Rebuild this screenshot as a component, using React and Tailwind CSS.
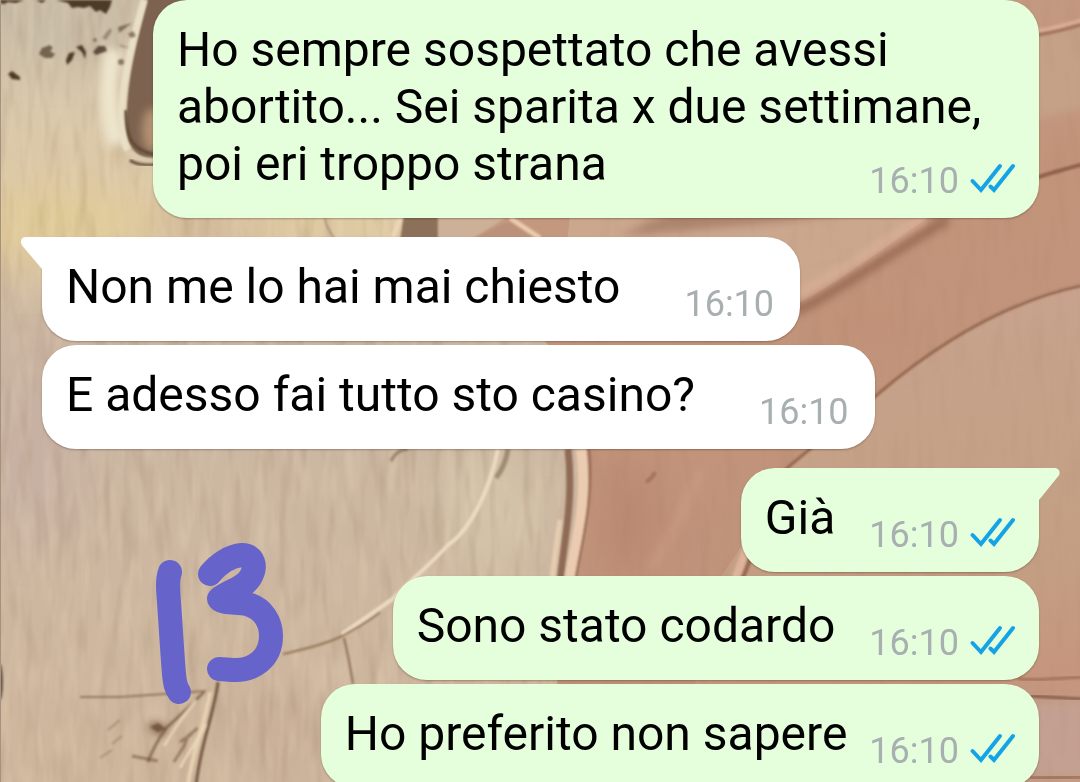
const messages = [
  {
    id: 1,
    mine: true,
    text: "Ho sempre sospettato che avessi abortito... Sei sparita x due settimane, poi eri troppo strana",
    time: "16:10",
  },
  { id: 2, mine: false, first: true, text: "Non me lo hai mai chiesto", time: "16:10" },
  { id: 3, mine: false, text: "E adesso fai tutto sto casino?", time: "16:10" },
  { id: 4, mine: true, first: true, text: "Già", time: "16:10" },
  { id: 5, mine: true, text: "Sono stato codardo", time: "16:10" },
  { id: 6, mine: true, tight: true, text: "Ho preferito non sapere", time: "16:10" },
];

function ReadTicks() {
  return (
    <svg
      viewBox="0 0 46 32"
      className="mb-1 h-8 w-[46px]"
      fill="none"
      stroke="#14a4e6"
      strokeWidth="4"
      strokeLinecap="round"
      role="img"
      aria-label="Letto"
    >
      <path d="M3.500 18 L12 27 L31 3" />
      <path d="M21.500 23.500 L25 27 L44 3" />
    </svg>
  );
}

function Tail({ mine }) {
  return mine ? (
    <svg viewBox="0 0 22 34" className="absolute top-0 -right-[21px] h-[34px] w-[22px]" aria-hidden="true">
      <path d="M0 0H16C21 0 23.500 4.500 20 8.500L1 32H0Z" fill="#e5ffdc" />
    </svg>
  ) : (
    <svg viewBox="0 0 22 34" className="absolute top-0 -left-[21px] h-[34px] w-[22px]" aria-hidden="true">
      <path d="M22 0H5C0 0 -1.500 4.500 1.500 9L21 32H22Z" fill="#ffffff" />
    </svg>
  );
}

function Bubble({ message }) {
  const { mine, first, tight, text, time } = message;
  const side = mine ? "self-end bg-[#e5ffdc]" : "self-start bg-white";
  const corner = first ? (mine ? "rounded-tr-none" : "rounded-tl-none") : "";
  const space = first ? "mt-[19px]" : "mt-1 first:mt-0";
  const timeGap = mine ? (tight ? "ml-[22px]" : "ml-[34px]") : "mr-0.5 ml-16";

  return (
    <li
      className={`relative max-w-[886px] rounded-[34px] px-6 pt-[21px] pb-4 shadow-[0_1px_2px_rgba(60,35,20,0.35)] ${side} ${corner} ${space}`}
    >
      {first && <Tail mine={mine} />}
      <p className="text-[48px] leading-[57px] text-black">
        {text}
        <span
          className={`float-right mt-[25px] flex items-center gap-2.5 text-4xl leading-[42px] text-[#a7afb1] ${timeGap}`}
        >
          <time>{time}</time>
          {mine && <ReadTicks />}
        </span>
      </p>
    </li>
  );
}

// painted plaster wallpaper
function Wallpaper() {
  return (
    <svg
      viewBox="0 0 1080 782"
      preserveAspectRatio="xMidYMid slice"
      className="absolute inset-0 h-full w-full"
      aria-hidden="true"
    >
      <defs>
        <linearGradient id="cream" x1="0" y1="0" x2="0" y2="1">
          <stop offset="0" stopColor="#cbbea7" />
          <stop offset="0.16" stopColor="#dac8aa" />
          <stop offset="0.29" stopColor="#decaa2" />
          <stop offset="0.42" stopColor="#cbb6a2" />
          <stop offset="0.65" stopColor="#ccb7a1" />
          <stop offset="1" stopColor="#ceb69c" />
        </linearGradient>
        <linearGradient id="clay" x1="0" y1="0" x2="0.3" y2="1">
          <stop offset="0" stopColor="#c79f89" />
          <stop offset="0.45" stopColor="#c2957b" />
          <stop offset="1" stopColor="#be917a" />
        </linearGradient>
        <linearGradient id="sand" gradientUnits="userSpaceOnUse" x1="900" y1="300" x2="960" y2="782">
          <stop offset="0" stopColor="#c8a28d" />
          <stop offset="0.35" stopColor="#c4a187" />
          <stop offset="0.6" stopColor="#c49e82" />
          <stop offset="0.8" stopColor="#c5967d" />
          <stop offset="1" stopColor="#c39a85" />
        </linearGradient>
        <filter id="soft1" x="-20%" y="-20%" width="140%" height="140%">
          <feGaussianBlur stdDeviation="1" />
        </filter>
        <filter id="soft4" filterUnits="userSpaceOnUse" x="-40" y="-40" width="1160" height="862">
          <feGaussianBlur stdDeviation="4" />
        </filter>
        <filter id="soft20" filterUnits="userSpaceOnUse" x="-80" y="-80" width="1240" height="942">
          <feGaussianBlur stdDeviation="20" />
        </filter>
        <filter id="grain" x="0" y="0" width="100%" height="100%" colorInterpolationFilters="sRGB">
          <feTurbulence type="fractalNoise" baseFrequency="0.09 0.016" numOctaves="2" seed="7" />
          <feColorMatrix values="0 0 0 0 0.45  0 0 0 0 0.32  0 0 0 0 0.22  2.5 0 0 0 -1.2" />
        </filter>
        <filter id="grainLight" x="0" y="0" width="100%" height="100%" colorInterpolationFilters="sRGB">
          <feTurbulence type="fractalNoise" baseFrequency="0.09 0.02" numOctaves="2" seed="19" />
          <feColorMatrix values="0 0 0 0 0.93  0 0 0 0 0.85  0 0 0 0 0.74  2.5 0 0 0 -1.1" />
        </filter>
      </defs>

      <rect width="1080" height="782" fill="url(#cream)" />
      <g filter="url(#soft20)">
        <ellipse cx="60" cy="225" rx="80" ry="30" fill="#e0cb96" />
        <ellipse cx="60" cy="30" rx="70" ry="30" fill="#c8bba6" />
        <ellipse cx="30" cy="450" rx="60" ry="90" fill="#c7b1a2" />
        <ellipse cx="490" cy="510" rx="50" ry="60" fill="#d3c3a9" />
        <ellipse cx="270" cy="740" rx="60" ry="50" fill="#cab09a" />
        <ellipse cx="210" cy="225" rx="60" ry="12" fill="#c5a991" />
      </g>
      <rect width="566" height="782" filter="url(#grainLight)" opacity="0.25" />
      <rect width="566" height="782" filter="url(#grain)" opacity="0.14" />

      {/* clay field on the right */}
      <path d="M405 216H1000V0H1080V782H560C560 680 548 620 570 572C584 530 590 500 586 449C575 380 560 330 440 250Z" fill="url(#clay)" />
      <path d="M570 216H930C880 250 850 275 798 304L560 300Z" fill="#cba78e" />
      <path d="M1020 40L1084 24V108L1020 122Z" fill="#c4a187" filter="url(#soft4)" />
      <path d="M1080 284C1000 300 930 350 876 395C840 425 810 450 780 475C760 510 740 560 700 600L690 782H1080Z" fill="url(#sand)" />
      <path d="M1020 702L1084 700V776H1020Z" fill="#c3a091" filter="url(#soft4)" />
      <g filter="url(#soft20)">
        <ellipse cx="630" cy="520" rx="22" ry="56" fill="#b9866e" />
        <ellipse cx="860" cy="325" rx="50" ry="20" fill="#c19177" />
      </g>

      {/* ridges and creases */}
      <g fill="none">
        <path d="M796 311C840 290 880 258 948 219" stroke="#8f6249" strokeWidth="10" opacity="0.8" filter="url(#soft4)" />
        <path d="M798 296C840 273 880 246 925 217" stroke="#dcb199" strokeWidth="9" opacity="0.8" filter="url(#soft4)" />
        <path d="M1036 178C1050 173 1065 169 1084 164" stroke="#91614a" strokeWidth="4" filter="url(#soft1)" />
        <path d="M785 470C810 448 850 418 878 394C930 350 1000 302 1084 285" stroke="#95684f" strokeWidth="3" filter="url(#soft1)" />
        <path d="M1030 32C1055 30 1068 24 1084 20" stroke="#d9ac95" strokeWidth="5" filter="url(#soft1)" />
        <path d="M1030 36C1055 33 1068 28 1084 24" stroke="#a3735c" strokeWidth="3" filter="url(#soft1)" />
        <path d="M1018 679C1040 681 1060 678 1084 677" stroke="#a3735a" strokeWidth="3" filter="url(#soft1)" />
        <path d="M1030 696L1084 699" stroke="#87604f" strokeWidth="3" filter="url(#soft1)" />
        <path d="M1030 778L1084 777" stroke="#a3785f" strokeWidth="5" filter="url(#soft1)" />
        <path d="M735 580C742 562 746 550 750 535" stroke="#dfb49c" strokeWidth="8" filter="url(#soft1)" />
        <path d="M742 580C750 562 754 548 757 535" stroke="#976850" strokeWidth="4" filter="url(#soft1)" />
        <path d="M646 482C650 480 653 477 655 472" stroke="#a5745c" strokeWidth="4" filter="url(#soft1)" />
        <path d="M700 470C690 500 670 535 652 570" stroke="#cb9d85" strokeWidth="10" opacity="0.6" filter="url(#soft4)" />
      </g>
      <rect x="566" width="514" height="782" filter="url(#grain)" opacity="0.05" />

      {/* dark hollow at the top left */}
      <path d="M114 50C106 90 108 120 118 144" stroke="#ede5cc" strokeWidth="18" fill="none" filter="url(#soft4)" />
      <path d="M150 -10H190V160H152C140 158 128 150 127 132C124 90 136 40 150 -10Z" fill="#7c6250" filter="url(#soft1)" />
      <ellipse cx="152" cy="130" rx="10" ry="22" fill="#b39071" filter="url(#soft4)" />
      <path d="M144 0C130 50 120 90 122 130C123 140 125 146 128 150" stroke="#e9dfc6" strokeWidth="7" fill="none" filter="url(#soft1)" />
      <path d="M126 110C126 140 132 150 156 155" stroke="#5f4836" strokeWidth="3" fill="none" filter="url(#soft1)" />
      <path d="M128 152C134 158 144 160 156 160" stroke="#dccab0" strokeWidth="4" fill="none" filter="url(#soft1)" />
      <path d="M130 160C136 165 146 165 156 165" stroke="#6b5140" strokeWidth="3" fill="none" filter="url(#soft1)" />

      {/* specks */}
      <g fill="#4d3a28" filter="url(#soft1)">
        <path d="M0 0H24L16 3L8 2L4 4L0 3Z" />
        <path d="M36 0H46L42 3Z" />
        <path d="M56 0H112L110 7L106 14L100 10L96 12L90 6L84 8L78 7L72 8L68 3Z" />
        <path d="M8 74L12 71L20 77L20 80L12 79Z" />
        <path d="M66 60L69 53L75 52L72 60L67 65Z" />
        <path d="M76 47L82 45L86 52L85 59L82 52Z" />
        <path d="M93 52L98 46L105 46L107 51L96 55Z" opacity="0.85" />
        <path d="M39 54L42 48L50 45L53 48L50 51L55 54L52 58L45 58Z" opacity="0.7" />
        <path d="M118 27L132 23L124 29L119 33Z" opacity="0.6" />
        <path d="M128 34L133 31L136 36L131 38Z" opacity="0.6" />
        <circle cx="121" cy="62" r="3" opacity="0.6" />
        <circle cx="95" cy="40" r="2" opacity="0.5" />
        <path d="M102 38L110 28L112 31L106 40Z" opacity="0.4" />
        <path d="M118 44L130 48L122 47Z" opacity="0.5" />
      </g>

      {/* strip between the top bubbles */}
      <g filter="url(#soft1)">
        <path d="M404 214H438V240H400Z" fill="#8d705a" />
        <path d="M438 214H512L470 240H438Z" fill="#cdb098" />
        <path d="M470 240L512 220L540 240Z" fill="#bb917a" />
        <path d="M400 218L393 237" stroke="#ecd6b8" strokeWidth="5" />
        <path d="M510 218L540 238" stroke="#eccbae" strokeWidth="5" />
        <path d="M325 218C326 228 330 232 334 238" stroke="#ab917d" strokeWidth="2" fill="none" />
      </g>
      <path d="M670 212H850L790 221L620 236Z" fill="#a0755f" opacity="0.7" filter="url(#soft4)" />

      {/* vertical ridge in the middle */}
      <g fill="none" filter="url(#soft1)">
        <path d="M568 449C574 500 564 540 560 582" stroke="#8f6a54" strokeWidth="7" />
        <path d="M581 449C588 500 576 540 569 582" stroke="#ebccb0" strokeWidth="10" />
        <path d="M589 449C594 500 582 540 575 582" stroke="#93644d" strokeWidth="2" />
        <path d="M560 520C556 545 554 560 552 582" stroke="#e6ccb0" strokeWidth="5" />
      </g>

      {/* fine cracks */}
      <g fill="none" filter="url(#soft1)">
        <path d="M498 449C490 490 470 530 448 545C425 570 405 585 394 598C370 615 355 625 342 634" stroke="#ecdac3" strokeWidth="4" />
        <path d="M508 449C506 462 502 470 496 478" stroke="#82694f" strokeWidth="5" opacity="0.6" />
        <path d="M380 612C366 624 355 628 342 636C325 645 300 650 283 654" stroke="#937658" strokeWidth="2" />
        <path d="M344 638C347 650 350 665 353 684" stroke="#8b6d54" strokeWidth="2" />
        <path d="M391 461C396 452 400 450 408 449" stroke="#806951" strokeWidth="3" opacity="0.7" />
        <path d="M218 682C214 715 200 745 196 786" stroke="#745843" strokeWidth="3" />
        <path d="M210 692C204 730 192 750 188 786" stroke="#e6d1b2" strokeWidth="4" />
        <path d="M80 697H120L150 695L206 691" stroke="#87694d" strokeWidth="2" opacity="0.8" />
        <path d="M204 692C190 706 180 716 166 728C158 740 152 750 148 762" stroke="#75583f" strokeWidth="3" opacity="0.7" />
        <path d="M198 728L188 736L184 746L174 762M192 734L180 742M132 756L158 761" stroke="#77593f" strokeWidth="3" opacity="0.6" />
        <path d="M196 700C184 716 174 728 164 746M206 724C196 744 188 752 180 768" stroke="#ecd9bb" strokeWidth="3" opacity="0.8" />
        <path d="M108 730L120 720M112 744L122 736M100 758L112 750" stroke="#8a6d51" strokeWidth="2" opacity="0.5" />
      </g>
      <path d="M146 726L156 722L168 728L160 736Z" fill="#66492f" opacity="0.8" filter="url(#soft4)" />
      <path d="M150 727L158 723L166 729L158 732Z" fill="#66492f" opacity="0.7" filter="url(#soft1)" />
      <ellipse cx="0" cy="682" rx="3" ry="18" fill="#6b5547" filter="url(#soft1)" />
      <rect width="1" height="782" fill="#a3927f" />
    </svg>
  );
}

// number scribbled over the chat with the marker tool
function MarkerNote() {
  return (
    <svg
      viewBox="156 542 128 164"
      className="absolute top-[542px] left-[156px] h-[164px] w-32"
      fill="none"
      stroke="#6663cb"
      strokeWidth="24"
      strokeLinecap="round"
      strokeLinejoin="round"
      role="img"
      aria-label="13"
    >
      <path d="M170 572C167 580 168 590 169 602C171 630 172 650 174 674C175 684 176 688 179 692" />
      <path d="M210 574C218 564 230 556 242 555C254 555 257 567 250 578C243 589 228 591 219 599C224 604 236 602 247 604C263 608 271 622 271 636C271 658 254 671 233 670L219 669" />
    </svg>
  );
}

export default function App() {
  return (
    <main className="relative h-screen overflow-hidden bg-[#cdb8a1] font-[Roboto,sans-serif]">
      <Wallpaper />
      <ul className="relative flex flex-col pr-[41px] pl-[42px]">
        {messages.map((message) => (
          <Bubble key={message.id} message={message} />
        ))}
      </ul>
      <MarkerNote />
    </main>
  );
}
